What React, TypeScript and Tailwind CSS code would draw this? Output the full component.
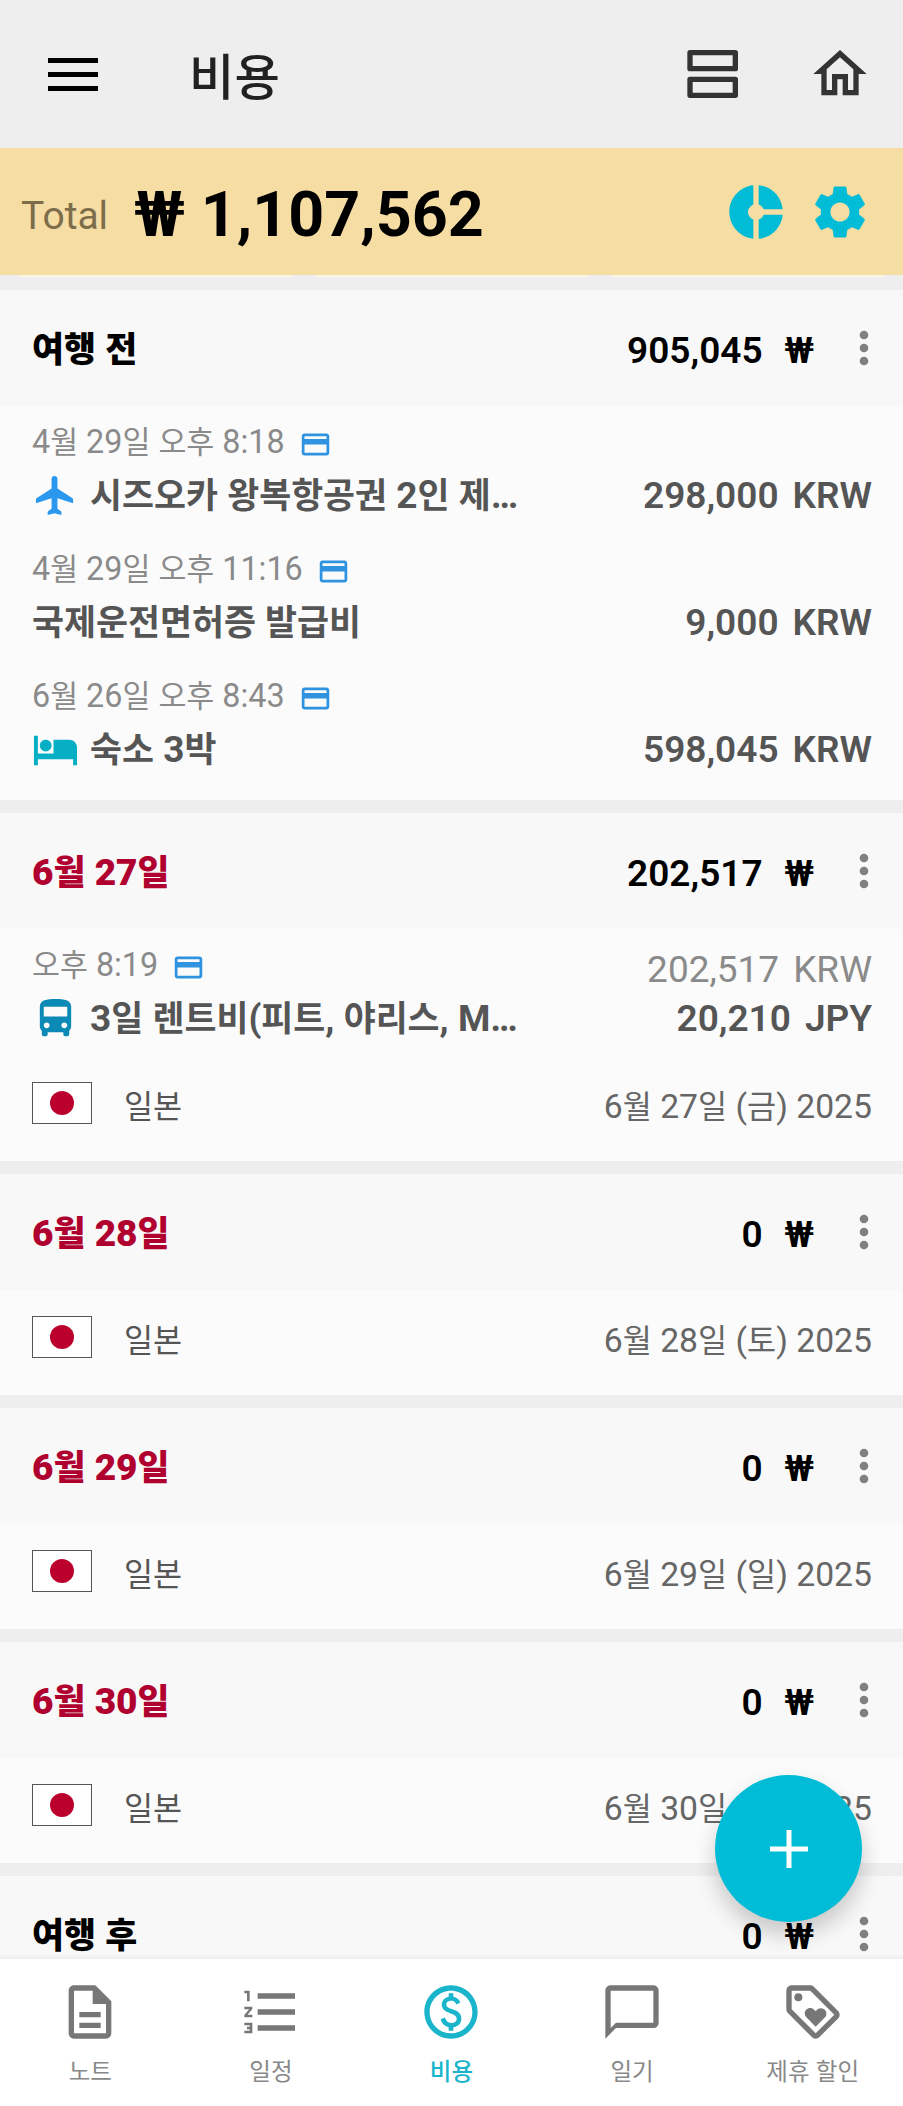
import React from "react";
import type { IconType } from "react-icons";
import {
    MdChatBubbleOutline,
    MdCreditCard,
    MdDirectionsBus,
    MdDonutSmall,
    MdFormatListNumbered,
    MdLocalHotel,
    MdMoreVert,
    MdOutlineHome,
    MdOutlineLoyalty,
    MdSettings,
} from "react-icons/md";

type Icon = IconType | ((props: { className?: string }) => React.ReactElement);

type Expense = {
    time: string;
    name: string;
    amount: string;
    currency: string;
    converted?: string;
    icon?: Icon;
    iconColor?: string;
};

type Day = {
    title: string;
    total: string;
    titleColor: string;
    expenses: Expense[];
    date?: string;
};

const PlaneIcon = ({ className }: { className?: string }) => (
    <svg viewBox="0 0 24 24" className={className} fill="currentColor">
        <path d="M10 3.5c0-.83.67-1.5 1.5-1.5s1.5.67 1.5 1.5v4.9l7.5 4.9c.4.3.5.5.5.9V16l-8-2.6v5.4l1.8 1.3c.2.2.2.3.2.6V22l-3.5-.9L8 22v-1.3c0-.3 0-.4.2-.6l1.8-1.3v-5.4L2 16v-1.8c0-.4.1-.6.5-.9L10 8.4z" />
    </svg>
);

const days: Day[] = [
    {
        title: "여행 전",
        total: "905,045",
        titleColor: "text-black",
        expenses: [
            { time: "4월 29일 오후 8:18", name: "시즈오카 왕복항공권 2인 제…", amount: "298,000", currency: "KRW", icon: PlaneIcon, iconColor: "text-[#2b98f0]" },
            { time: "4월 29일 오후 11:16", name: "국제운전면허증 발급비", amount: "9,000", currency: "KRW" },
            { time: "6월 26일 오후 8:43", name: "숙소 3박", amount: "598,045", currency: "KRW", icon: MdLocalHotel, iconColor: "text-[#06afc4]" },
        ],
    },
    {
        title: "6월 27일",
        total: "202,517",
        titleColor: "text-[#b00030]",
        expenses: [
            { time: "오후 8:19", name: "3일 렌트비(피트, 야리스, M…", amount: "20,210", currency: "JPY", converted: "202,517", icon: MdDirectionsBus, iconColor: "text-[#0a8ab5]" },
        ],
        date: "6월 27일 (금) 2025",
    },
    { title: "6월 28일", total: "0", titleColor: "text-[#b00030]", expenses: [], date: "6월 28일 (토) 2025" },
    { title: "6월 29일", total: "0", titleColor: "text-[#b00030]", expenses: [], date: "6월 29일 (일) 2025" },
    { title: "6월 30일", total: "0", titleColor: "text-[#b00030]", expenses: [], date: "6월 30일 (월) 2025" },
    { title: "여행 후", total: "0", titleColor: "text-black", expenses: [] },
];

// Hangul is set slightly smaller than the latin digits next to it
const Ko = ({ children }: { children: string }) => (
    <>
        {children.split(/([가-힣]+)/).map((part, i) =>
            i % 2 ? <span key={i} className="text-[0.94em]">{part}</span> : part
        )}
    </>
);

const AgendaIcon = () => (
    <svg viewBox="0 0 24 24" className="size-16" fill="none" stroke="currentColor" strokeWidth="2" strokeLinejoin="round">
        <path d="M3 4h17v6H3zM3 14h17v6H3z" />
    </svg>
);

const NoteIcon = ({ className }: { className?: string }) => (
    <svg viewBox="0 0 24 24" className={className} fill="currentColor">
        <path d="M14 2H6c-1.1 0-2 .9-2 2v16c0 1.1.9 2 2 2h12c1.1 0 2-.9 2-2V8l-6-6zM6 20V4h7v5h5v11H6z" />
        <path d="M8 12h8v2H8zM8 16h8v2H8z" />
    </svg>
);

const DollarIcon = ({ className }: { className?: string }) => (
    <svg viewBox="0 0 24 24" className={className} fill="currentColor">
        <path d="M12 2C6.48 2 2 6.48 2 12s4.48 10 10 10 10-4.48 10-10S17.52 2 12 2zm0 18c-4.41 0-8-3.59-8-8s3.59-8 8-8 8 3.59 8 8-3.59 8-8 8z" />
        <path d="M12.89 11.1c-1.78-.59-2.64-.96-2.64-1.9 0-1.02 1.11-1.39 1.81-1.39 1.31 0 1.79.99 1.9 1.34l1.58-.67c-.15-.44-.82-1.91-2.66-2.23V5h-1.75v1.26c-2.6.56-2.62 2.85-2.62 2.96 0 2.27 2.25 2.91 3.35 3.31 1.58.56 2.28 1.07 2.28 2.03 0 1.13-1.05 1.61-1.98 1.61-1.82 0-2.34-1.87-2.4-2.09l-1.66.67c.63 2.19 2.28 2.78 3.02 2.96V19h1.75v-1.24c.52-.09 3.02-.59 3.02-3.22.01-1.39-.6-2.61-3-3.44z" />
    </svg>
);

const tabs: { label: string; icon: Icon; active?: boolean }[] = [
    { label: "노트", icon: NoteIcon },
    { label: "일정", icon: MdFormatListNumbered },
    { label: "비용", icon: DollarIcon, active: true },
    { label: "일기", icon: MdChatBubbleOutline },
    { label: "제휴 할인", icon: MdOutlineLoyalty },
];

const ExpenseRow = ({ expense }: { expense: Expense }) => {
    const Icon = expense.icon;
    return (
        <div className="flex h-[127px] justify-between pl-8 pr-[31px]">
            <div className="pt-[15px]">
                <div className="flex h-11 items-center whitespace-nowrap text-[32.3px] leading-[44px] text-[#8a8a8a]">
                    <div className="pb-px"><Ko>{expense.time}</Ko></div>
                    <MdCreditCard className="mt-0.5 ml-3.5 size-[33px] text-[#2f93e0]" />
                </div>
                <div className="flex h-[62px] items-center whitespace-nowrap text-[37px] font-bold leading-[62px] text-[#555]">
                    {Icon && <Icon className={`mr-[11px] mb-0.5 size-[47px] ${expense.iconColor}`} />}
                    <div><Ko>{expense.name}</Ko></div>
                </div>
            </div>
            <div className="pt-[19px] text-right text-[37px] text-[#555]">
                <div className="h-10 leading-[44px] text-[#8a8a8a]">
                    {expense.converted && <>{expense.converted}<span className="ml-[14px]">KRW</span></>}
                </div>
                <div className="font-semibold leading-[62px]">
                    {expense.amount}
                    <span className="ml-[14px]">{expense.currency}</span>
                </div>
            </div>
        </div>
    );
};

const CountryRow = ({ date }: { date: string }) => (
    <div className="flex h-[105px] items-center pb-0.5 pl-8 pr-[31px] text-[33.7px]">
        <div className="mb-2.5 flex h-[42px] w-[60px] items-center justify-center border border-[#555] bg-white">
            <div className="size-6 rounded-full bg-[#bc002d]" />
        </div>
        <span className="ml-8 text-[#555]"><Ko>일본</Ko></span>
        <span className="ml-auto text-[#666]"><Ko>{date}</Ko></span>
    </div>
);

const DaySection = ({ day }: { day: Day }) => (
    <section className="mb-[13px] shrink-0 bg-[#fbfbfb]">
        <div className="flex h-[116px] items-center bg-[#f8f8f8] pl-8 pr-[13px] text-[37px]">
            <h2 className={`pt-1 font-black ${day.titleColor}`}><Ko>{day.title}</Ko></h2>
            <span className="ml-auto pt-1.5 font-semibold text-black">{day.total}</span>
            <span className="ml-[22px] pt-1.5 font-semibold text-black">₩</span>
            <MdMoreVert className="ml-6 size-[52px] text-[#808080]" />
        </div>
        {day.expenses.map((expense) => (
            <ExpenseRow key={expense.name} expense={expense} />
        ))}
        {day.date ? <CountryRow date={day.date} /> : <div className="h-[13px]" />}
    </section>
);

const App = () => {
    return (
        <div className="relative flex h-[2106px] w-[903px] flex-col overflow-hidden bg-[#eee] font-[Roboto,'Noto_Sans_CJK_KR',sans-serif]">
            <header className="flex h-[148px] shrink-0 items-center pl-12 pr-[31px] text-[#333]">
                <div className="flex flex-col gap-[9px]">
                    <div className="h-[5px] w-[50px] bg-black" />
                    <div className="h-[5px] w-[50px] bg-black" />
                    <div className="h-[5px] w-[50px] bg-black" />
                </div>
                <h1 className="ml-[91px] pt-1.5 text-[52.5px] font-medium text-[#212121]"><Ko>비용</Ko></h1>
                <div className="ml-auto flex items-center gap-[62px]">
                    <AgendaIcon />
                    <MdOutlineHome className="size-16" />
                </div>
            </header>

            <div className="flex h-[127px] shrink-0 items-center bg-[#f6dda4] pl-[21px] pr-[31px]">
                <span className="pt-2.5 text-[39px] text-[#7d6d4a]">Total</span>
                <span className="ml-[26px] pt-2 text-[62.8px] font-bold text-black">₩ 1,107,562</span>
                <div className="ml-auto flex gap-5 text-[#00bcd6]">
                    <MdDonutSmall className="size-16" />
                    <MdSettings className="size-16" />
                </div>
            </div>

            {/* bottom edge of the summary cards scrolled under the total bar */}
            <div className="flex h-[15px] shrink-0 gap-[25px] px-[19px]">
                <div className="h-0.5 flex-1 rounded-b bg-[#fdf6e0]" />
                <div className="h-0.5 flex-1 rounded-b bg-[#fdf6e0]" />
                <div className="h-0.5 flex-1 rounded-b bg-[#fdf6e0]" />
            </div>

            <main className="flex min-h-0 flex-1 flex-col overflow-hidden">
                {days.map((day) => (
                    <DaySection key={day.title} day={day} />
                ))}
            </main>

            <button className="absolute bottom-[184px] right-[41px] z-10 flex size-[147px] items-center justify-center rounded-full bg-[#00bcd6] shadow-[0_12px_22px_rgba(0,0,0,0.2)]">
                <svg viewBox="0 0 38 38" className="size-[38px]" stroke="white" strokeWidth="5">
                    <path d="M19 0v38M0 19h38" />
                </svg>
            </button>

            <nav className="relative grid h-[147px] shrink-0 grid-cols-5 bg-white shadow-[0_-2px_4px_rgba(0,0,0,0.06)]">
                {tabs.map(({ label, icon: Icon, active }) => (
                    <div key={label} className={`flex flex-col items-center pt-[21px] ${active ? "text-[#1bb5cb]" : "text-[#777]"}`}>
                        <Icon className="size-16" />
                        <span className={`mt-2.5 text-[25px] leading-9 ${active ? "font-medium" : "text-[#888]"}`}><Ko>{label}</Ko></span>
                    </div>
                ))}
            </nav>
        </div>
    );
};

export default App;
